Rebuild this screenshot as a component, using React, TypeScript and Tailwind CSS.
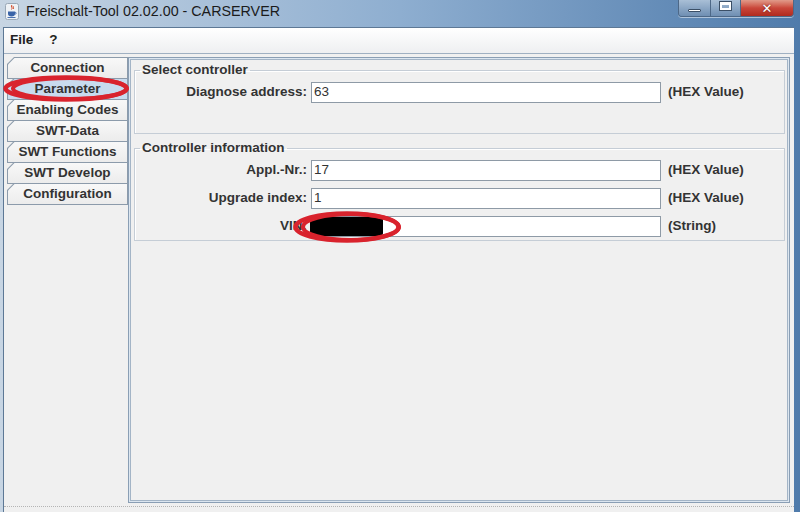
import React from "react";

const tabs = [
  "Connection",
  "Parameter",
  "Enabling Codes",
  "SWT-Data",
  "SWT Functions",
  "SWT Develop",
  "Configuration",
];

function JavaIcon() {
  return (
    <svg width="14" height="17" viewBox="0 0 14 17">
      <rect x="0.5" y="0.5" width="13" height="16" rx="2" fill="#eef2f6" stroke="#9aa8b6" />
      <path d="M7 2c-2 1.5 1.5 2.5 -0.5 4.5M8.5 3c-1.2 1 1 1.6 -0.3 3" stroke="#d24a2a" strokeWidth="1" fill="none" />
      <path d="M3 8.5h7v2.5c0 1.5-1.2 2.5-3.5 2.5S3 12.5 3 11z" fill="#3a64a8" />
      <path d="M10 9.2c1.6 0 1.6 2 0 2" stroke="#3a64a8" strokeWidth="0.9" fill="none" />
      <path d="M2.5 14.5h8" stroke="#3a64a8" strokeWidth="0.9" />
    </svg>
  );
}

function WindowButtons() {
  return (
    <div className="flex h-[17px] overflow-hidden rounded-b-[4px] border border-t-0 border-[#4d6887] shadow-[0_1px_0_rgba(255,255,255,0.5)]">
      <div className="flex w-[32px] items-end justify-center border-r border-[#4d6887] bg-gradient-to-b from-[#a9bfd6] to-[#6f8fb3] pb-[4px]">
        <div className="h-[3px] w-[13px] rounded-[1px] border border-[#3b4f66] bg-white" />
      </div>
      <div className="flex w-[30px] items-start justify-center border-r border-[#4d6887] bg-gradient-to-b from-[#a9bfd6] to-[#6f8fb3] pt-[2px]">
        <div className="h-[8px] w-[11px] border-[2px] border-white border-t-[3px] shadow-[0_0_0_1px_#3b4f66]" />
      </div>
      <div className="flex w-[52px] items-center justify-center bg-gradient-to-b from-[#e09a8a] via-[#c9463a] to-[#b02a1e]">
        <span className="font-['DejaVu_Sans',sans-serif] text-[13px] font-bold leading-none text-white [text-shadow:0_0_2px_#5a1a14]">
          ✕
        </span>
      </div>
    </div>
  );
}

// hand-drawn style marker ring: thicker at the left end
function MarkerRing({ w, h }: { w: number; h: number }) {
  return (
    <svg width={w} height={h} viewBox={`0 0 ${w} ${h}`}>
      <ellipse cx={w / 2} cy={h / 2} rx={w / 2 - 2.5} ry={h / 2 - 2.5} fill="none" stroke="#d9232d" strokeWidth="4.5" />
      <ellipse cx={w / 2 + 4} cy={h / 2} rx={w / 2 - 6} ry={h / 2 - 3} fill="none" stroke="#d9232d" strokeWidth="4" />
    </svg>
  );
}

function Tab({ label, active }: { label: string; active: boolean }) {
  return (
    <div className="relative -mb-px h-[22px] bg-[#8c9bab] [clip-path:polygon(7px_0,100%_0,100%_100%,0_100%,0_7px)]">
      <div
        className={
          "absolute inset-x-px top-px bottom-px flex items-center justify-center [clip-path:polygon(6.5px_0,100%_0,100%_100%,0_100%,0_6.5px)] " +
          (active ? "bg-[#c8dbee]" : "bg-gradient-to-b from-[#f8f8f8] to-[#ececec]")
        }
      >
        <span className="text-[13.5px] font-bold leading-none text-[#333333]">{label}</span>
      </div>
    </div>
  );
}

function Row({ label, value, hint }: { label: string; value: string; hint: string }) {
  return (
    <div className="flex h-[21px] items-center">
      <div className="w-[172px] text-right text-[13.5px] font-bold text-[#333333]">{label}</div>
      <div className="ml-[4px] flex h-[21px] w-[350px] items-center border border-[#8e9aa6] bg-white pl-[2px] text-[13.5px] text-[#333333]">
        {value}
      </div>
      <div className="ml-[7px] text-[13.5px] font-bold text-[#333333]">{hint}</div>
    </div>
  );
}

export default function App() {
  return (
    <div className="relative h-[512px] w-[800px] overflow-hidden bg-gradient-to-r from-[#c7d5e3] via-[#8eaed0] to-[#4f7bab] font-['Liberation_Sans',Arial,sans-serif]">
      {/* title bar */}
      <div className="flex h-[27px] items-start">
        <div className="ml-[5px] mt-[3px]">
          <JavaIcon />
        </div>
        <div className="ml-[7px] mt-[2px] text-[14.3px] leading-[18px] text-[#1b1b1b]">
          Freischalt-Tool 02.02.00 - CARSERVER
        </div>
        <div className="ml-auto mr-[6px]">
          <WindowButtons />
        </div>
      </div>

      {/* client area */}
      <div className="ml-[3px] mr-[6px] h-[485px] border-l border-t border-[#5d7895] bg-[#f0f0f0]">
        {/* menu bar */}
        <div className="flex h-[26px] items-center gap-[16px] border-b border-[#9fb0c2] bg-gradient-to-b from-[#ffffff] to-[#eeeff1] pl-[6px] text-[13.5px] font-bold text-[#222222]">
          <span>File</span>
          <span>?</span>
        </div>

        <div className="flex pt-[3px]">
          {/* tabs */}
          <div className="ml-[3px] flex w-[121px] flex-col">
            {tabs.map((t) => (
              <Tab key={t} label={t} active={t === "Parameter"} />
            ))}
          </div>

          {/* content panel */}
          <div className="h-[446px] w-[662px] border border-[#8a9eb4] bg-[#dce6f0] p-px">
            <div className="h-full border border-[#a3b4c6] bg-[#f0f0f0] pl-[3px] pr-[2px] pt-[3px]">
              <fieldset className="border border-[#c5cdd6] px-0 pb-[30px] shadow-[inset_1px_1px_0_#ffffff]">
                <legend className="ml-[5px] px-[2px] text-[13.5px] font-bold leading-[14px] text-[#333333]">
                  Select controller
                </legend>
                <div className="pt-[5px]">
                  <Row label="Diagnose address:" value="63" hint="(HEX Value)" />
                </div>
              </fieldset>

              <fieldset className="mt-[7px] border border-[#c5cdd6] px-0 pb-[3px] shadow-[inset_1px_1px_0_#ffffff]">
                <legend className="ml-[5px] px-[2px] text-[13.5px] font-bold leading-[14px] text-[#333333]">
                  Controller information
                </legend>
                <div className="flex flex-col gap-[7px] pt-[5px]">
                  <Row label="Appl.-Nr.:" value="17" hint="(HEX Value)" />
                  <Row label="Upgrade index:" value="1" hint="(HEX Value)" />
                  <Row label="VIN:" value="" hint="(String)" />
                </div>
              </fieldset>
            </div>
          </div>
        </div>

        {/* bottom status strip */}
        <div className="mt-[3px] border-t border-dotted border-[#b4b4b4]" />
      </div>

      {/* annotations drawn over the screenshot */}
      <div className="absolute left-[310px] top-[217px] h-[19px] w-[73px] rounded-[3px] bg-black" />
      <div className="absolute left-[3px] top-[75px]">
        <MarkerRing w={126} h={27} />
      </div>
      <div className="absolute left-[293px] top-[211px]">
        <MarkerRing w={108} h={32} />
      </div>
    </div>
  );
}
